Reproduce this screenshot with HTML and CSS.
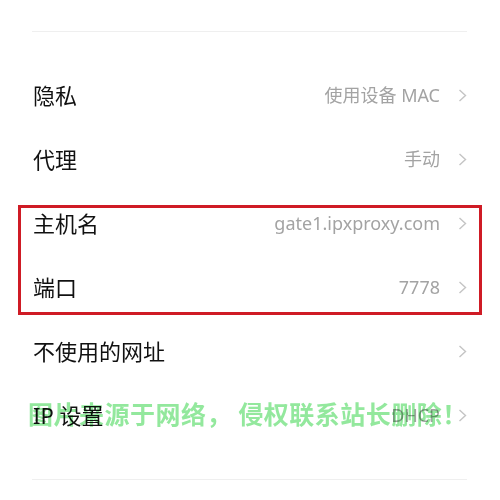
FILE: index.html
```html
<!DOCTYPE html>
<html lang="zh-CN">
<head>
<meta charset="utf-8">
<link rel="stylesheet" href="styles.css">
</head>
<body>
<div class="page">
  <div class="divider top"></div>
  <div class="list">
    <div class="row"><span class="label">隐私</span><span class="value">使用设备 MAC</span><span class="chev"><svg width="9" height="13" viewBox="0 0 9 13"><path d="M1.5 1 L7.5 6.5 L1.5 12" fill="none" stroke="#c4c4c4" stroke-width="1.4"/></svg></span></div>
    <div class="row"><span class="label">代理</span><span class="value">手动</span><span class="chev"><svg width="9" height="13" viewBox="0 0 9 13"><path d="M1.5 1 L7.5 6.5 L1.5 12" fill="none" stroke="#c4c4c4" stroke-width="1.4"/></svg></span></div>
    <div class="group">
      <div class="row"><span class="label">主机名</span><span class="value">gate1.ipxproxy.com</span><span class="chev"><svg width="9" height="13" viewBox="0 0 9 13"><path d="M1.5 1 L7.5 6.5 L1.5 12" fill="none" stroke="#c4c4c4" stroke-width="1.4"/></svg></span></div>
      <div class="row"><span class="label">端口</span><span class="value">7778</span><span class="chev"><svg width="9" height="13" viewBox="0 0 9 13"><path d="M1.5 1 L7.5 6.5 L1.5 12" fill="none" stroke="#c4c4c4" stroke-width="1.4"/></svg></span></div>
    </div>
    <div class="row"><span class="label">不使用的网址</span><span class="value"></span><span class="chev"><svg width="9" height="13" viewBox="0 0 9 13"><path d="M1.5 1 L7.5 6.5 L1.5 12" fill="none" stroke="#c4c4c4" stroke-width="1.4"/></svg></span></div>
    <div class="row wm-row"><span class="label">IP 设置</span><span class="value">DHCP</span><span class="chev"><svg width="9" height="13" viewBox="0 0 9 13"><path d="M1.5 1 L7.5 6.5 L1.5 12" fill="none" stroke="#c4c4c4" stroke-width="1.4"/></svg></span><span class="watermark">图片来源于网络，&nbsp;侵权联系站长删除！</span></div>
  </div>
  <div class="divider bottom"></div>
</div>
</body>
</html>
```
FILE: styles.css
```css
html, body {
  margin: 0;
  padding: 0;
  background: #ffffff;
}
body {
  font-family: "Noto Sans", "Noto Sans CJK SC", sans-serif;
}
.page {
  width: 500px;
  height: 500px;
  padding: 31px 33px 0 32px;
  box-sizing: border-box;
  position: relative;
  overflow: hidden;
}
.divider {
  height: 1px;
  background: #efefef;
}
.list {
  padding: 31px 0 32px 1px;
}
.row {
  height: 64px;
  display: flex;
  align-items: center;
  position: relative;
}
.label {
  font-size: 22px;
  color: #111111;
  flex: 1;
  line-height: 1;
}
.value {
  font-size: 18px;
  color: #a3a3a3;
  line-height: 1;
}
.chev {
  display: flex;
  margin-left: 18px;
  width: 9px;
}
.group {
  position: relative;
}
.group::after {
  content: "";
  position: absolute;
  left: -15px;
  right: -15px;
  top: 14px;
  bottom: 4px;
  border: 3.5px solid #cf1b25;
}
.watermark {
  position: absolute;
  left: -5px;
  top: 18px;
  font-size: 25px;
  font-weight: 700;
  letter-spacing: 0.5px;
  color: #93e89d;
  mix-blend-mode: multiply;
  white-space: nowrap;
  line-height: 1;
  font-family: "Noto Sans CJK SC", sans-serif;
}
```
